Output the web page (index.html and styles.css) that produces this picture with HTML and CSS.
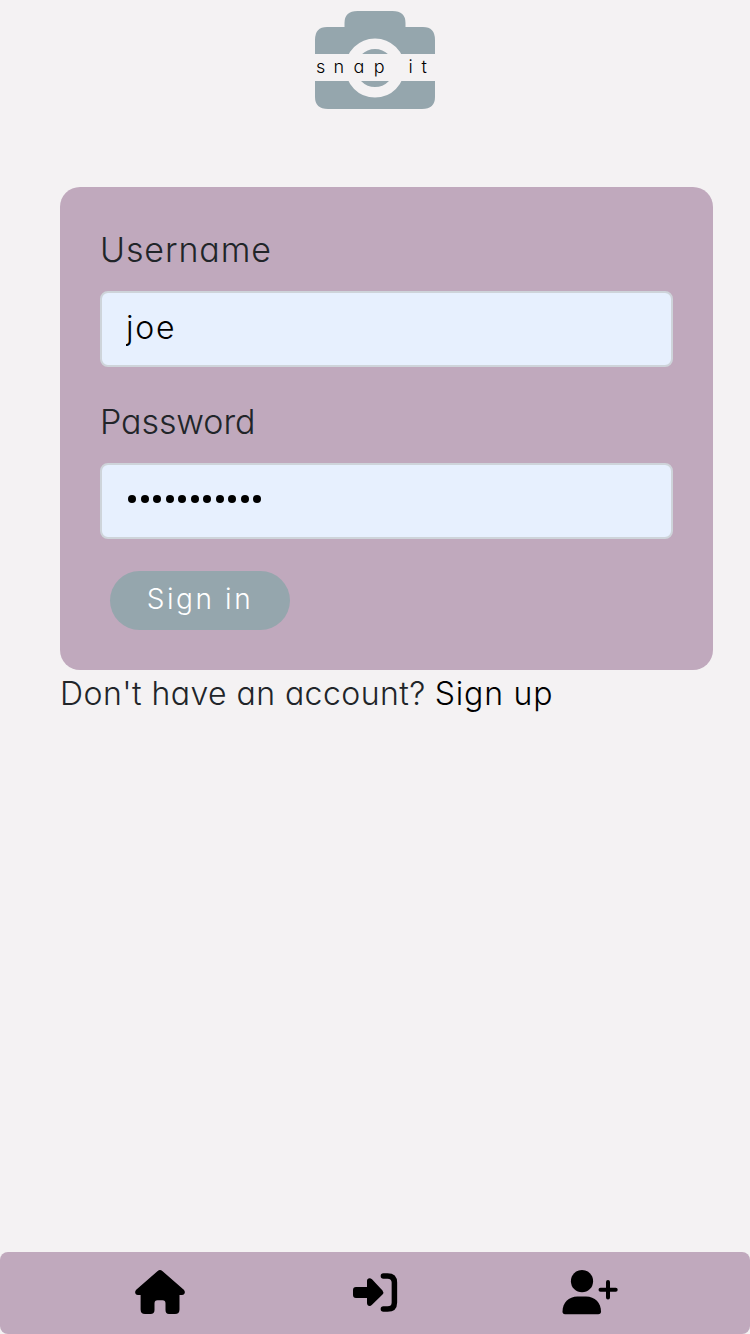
FILE: index.html
```html
<!DOCTYPE html>
<html lang="en">
<head>
<meta charset="utf-8">
<title>snap it</title>
<link rel="stylesheet" href="styles.css">
</head>
<body>
<header class="header">
  <svg class="logo" viewBox="0 0 120 98" role="img" aria-label="snap it">
    <path class="logo-body" d="M12 16H29.5V12Q29.5 0 42.5 0H77.5Q90.5 0 90.5 12V16H108Q120 16 120 29V43H0V29Q0 16 12 16ZM0 70H120V86Q120 98 107 98H13Q0 98 0 86Z"/>
    <circle class="logo-ring" cx="60" cy="57" r="24.3"/>
    <path class="logo-band" d="M0 43H120V70H0Z"/>
    <text class="logo-text" y="62" x="1 18.5 38.5 58.7 93.5 106.5">snapit</text>
  </svg>
</header>
<main class="main">
  <form class="card">
    <label class="label username-label" for="username">Username</label>
    <input class="field username" id="username" type="text" value="joe">
    <label class="label password-label" for="password">Password</label>
    <div class="field" id="password"><span class="dots"><i></i><i></i><i></i><i></i><i></i><i></i><i></i><i></i><i></i><i></i><i></i></span></div>
    <button class="button" type="button">Sign in</button>
  </form>
  <p class="signup"><span class="question">Don't have an account?</span> <a class="link">Sign up</a></p>
</main>
<nav class="nav">
  <a class="nav-home"><svg width="50" height="44" viewBox="0 0 50 44"><path d="M22.7 1.1Q25-.9 27.3 1.1L48.8 19.8C51 22 49.5 25 47 25H44.5V39.5Q44.5 44 40 44H34Q30.5 44 30.5 40V33.5Q30.5 30.3 27.5 30.3H22.5Q19.5 30.3 19.5 33.5V40Q19.5 44 15.5 44H10Q5.6 44 5.6 39.5V25H3C.3 25-.9 22 1.2 19.8Z"/></svg></a>
  <a class="nav-signin"><svg width="45" height="40" viewBox="0 0 45 40"><path d="M3 14H14V8C14 5 17 4.5 19 6.2L29.5 17.5Q31.2 19.5 29.5 21.5L19 31.8C17 34 14 33 14 30V25H3Q0 25 0 22V17Q0 14 3 14Z"/><path class="stroke" d="M30.4 2.9H34.5Q41.4 2.9 41.4 9.5V29.5Q41.4 36.1 34.5 36.1H30.4"/></svg></a>
  <a class="nav-signup"><svg width="56" height="45" viewBox="0 0 56 45"><circle cx="20" cy="11.2" r="11.1"/><path d="M15.5 26.5H24C33 26.5 39 33 39 41.5Q39 44.3 36.2 44.3H3Q.5 44.3.5 41.5C.5 33 6.5 26.5 15.5 26.5Z"/><path class="stroke plus" d="M38.5 19.7H53.7M46 12V27.4"/></svg></a>
</nav>
</body>
</html>
```
FILE: styles.css
```css
* { box-sizing: border-box; }
body {
  margin: 0;
  height: 1334px;
  display: flex;
  flex-direction: column;
  background: #f4f2f3;
  color: #212529;
  font-family: Inter, "Open Sans", sans-serif;
  font-feature-settings: "cv11";
  font-weight: 300;
}
.header { height: 187px; padding-top: 11px; display: flex; justify-content: center; align-items: flex-start; }
.logo { display: block; width: 120px; height: 98px; }
.logo-body { fill: #95a6ad; }
.logo-ring { fill: none; stroke: #f4f2f3; stroke-width: 10.5; }
.logo-band { fill: #f4f2f3; }
.logo-text { font-size: 18px; font-weight: 300; fill: #000; }
.main { flex: 1; padding: 0 37px 0 60px; }
.card {
  height: 483px;
  padding: 42px 40px 40px;
  display: flex;
  flex-direction: column;
  align-items: flex-start;
  background: #c0a9bd;
  border-radius: 20px;
}
.label { height: 62px; line-height: 42px; font-size: 34px; white-space: nowrap; }
.username-label { letter-spacing: 0.9px; }
.password-label { margin-top: 34px; letter-spacing: -0.1px; }
.field {
  display: flex;
  align-items: center;
  width: 573px;
  height: 76px;
  padding: 0 24px;
  border: 2px solid #ced4da;
  border-radius: 8px;
  background: #e7f0fe;
  color: #000;
  font: inherit;
  font-size: 32px;
}
.username { padding-bottom: 3px; letter-spacing: 1.8px; font-feature-settings: "cv11"; }
.dots { display: flex; gap: 4.5px; padding: 0 0 5px 2px; }
.dots i { width: 8px; height: 8px; border-radius: 50%; background: #000; }
.button {
  width: 180px;
  height: 59px;
  margin: 32px 0 0 10px;
  padding: 0 0 3px;
  border: 0;
  border-radius: 30px;
  background: #95a6ad;
  color: #fff;
  font: inherit;
  font-size: 28px;
  letter-spacing: 2.6px;
}
.signup { margin: 0; line-height: 48px; font-size: 32px; white-space: nowrap; }
.question { letter-spacing: 0.45px; }
.link { color: #000; letter-spacing: 0.8px; }
.nav {
  display: flex;
  height: 82px;
  padding: 18px 132px 0 135px;
  justify-content: space-between;
  background: #c0a9bd;
  border-radius: 8px;
}
.nav svg { display: block; }
.nav-signin { padding-top: 3px; margin-left: 4px; }
.stroke { fill: none; stroke: #000; stroke-width: 5.5; stroke-linecap: round; }
.plus { stroke-width: 4; }
```
